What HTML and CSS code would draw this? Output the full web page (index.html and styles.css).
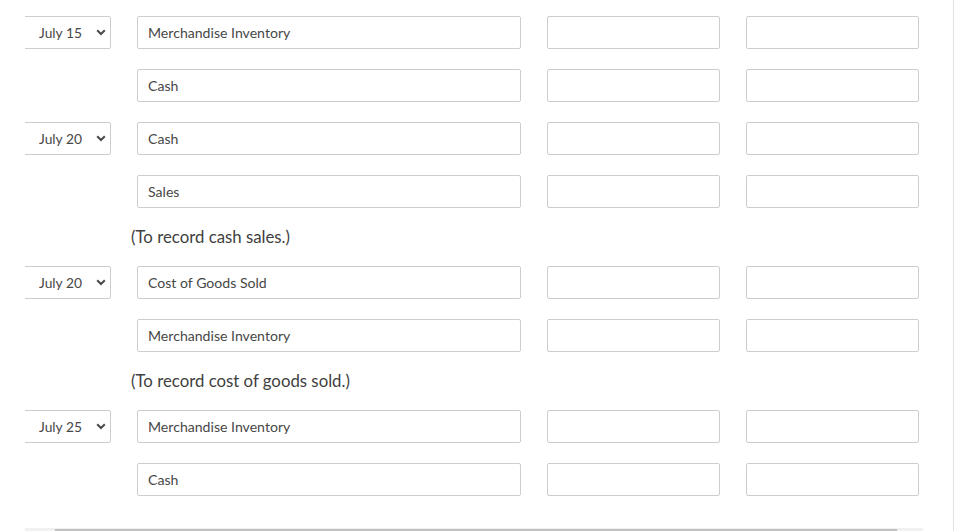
FILE: index.html
```html
<!DOCTYPE html>
<html lang="en">
<head>
    <meta charset="UTF-8">
    <meta name="viewport" content="width=device-width, initial-scale=1.0">
    <title>Journal Entries</title>
    <link rel="stylesheet" href="styles.css">
</head>
<body>
    <div class="page">
        <div class="scroll-area">
            <div class="journal">
                <div class="entry-row">
                    <div class="date-cell">
                        <select class="date-select">
                            <option>July 15</option>
                        </select>
                        <svg class="chevron" width="10" height="7" viewBox="0 0 10 7"><path d="M1.2 1.2 L5 5 L8.8 1.2" fill="none" stroke="#4a4a4a" stroke-width="2"/></svg>
                    </div>
                    <input class="account" type="text" value="Merchandise Inventory">
                    <input class="amount" type="text">
                    <input class="amount" type="text">
                </div>
                <div class="entry-row">
                    <div class="date-cell"></div>
                    <input class="account" type="text" value="Cash">
                    <input class="amount" type="text">
                    <input class="amount" type="text">
                </div>

                <div class="entry-row">
                    <div class="date-cell">
                        <select class="date-select">
                            <option>July 20</option>
                        </select>
                        <svg class="chevron" width="10" height="7" viewBox="0 0 10 7"><path d="M1.2 1.2 L5 5 L8.8 1.2" fill="none" stroke="#4a4a4a" stroke-width="2"/></svg>
                    </div>
                    <input class="account" type="text" value="Cash">
                    <input class="amount" type="text">
                    <input class="amount" type="text">
                </div>
                <div class="entry-row">
                    <div class="date-cell"></div>
                    <input class="account" type="text" value="Sales">
                    <input class="amount" type="text">
                    <input class="amount" type="text">
                </div>
                <p class="note">(To record cash sales.)</p>

                <div class="entry-row">
                    <div class="date-cell">
                        <select class="date-select">
                            <option>July 20</option>
                        </select>
                        <svg class="chevron" width="10" height="7" viewBox="0 0 10 7"><path d="M1.2 1.2 L5 5 L8.8 1.2" fill="none" stroke="#4a4a4a" stroke-width="2"/></svg>
                    </div>
                    <input class="account" type="text" value="Cost of Goods Sold">
                    <input class="amount" type="text">
                    <input class="amount" type="text">
                </div>
                <div class="entry-row">
                    <div class="date-cell"></div>
                    <input class="account" type="text" value="Merchandise Inventory">
                    <input class="amount" type="text">
                    <input class="amount" type="text">
                </div>
                <p class="note">(To record cost of goods sold.)</p>

                <div class="entry-row">
                    <div class="date-cell">
                        <select class="date-select">
                            <option>July 25</option>
                        </select>
                        <svg class="chevron" width="10" height="7" viewBox="0 0 10 7"><path d="M1.2 1.2 L5 5 L8.8 1.2" fill="none" stroke="#4a4a4a" stroke-width="2"/></svg>
                    </div>
                    <input class="account" type="text" value="Merchandise Inventory">
                    <input class="amount" type="text">
                    <input class="amount" type="text">
                </div>
                <div class="entry-row">
                    <div class="date-cell"></div>
                    <input class="account" type="text" value="Cash">
                    <input class="amount" type="text">
                    <input class="amount" type="text">
                </div>
            </div>
            <div class="scrollbar"><div class="thumb"></div></div>
        </div>
    </div>
</body>
</html>
```

FILE: styles.css
```css
html, body {
    margin: 0;
    height: 100%;
    overflow: hidden;
    background-color: #fff;
}
body {
    font-family: 'Lato', 'Open Sans', sans-serif;
    color: #474747;
}
.page {
    width: 953px;
    height: 100%;
    border-right: 1px solid #e2e2e2;
}
.scroll-area {
    margin-left: 25px;
    width: 898px;
    padding-top: 16px;
    overflow: hidden;
}
.journal {
    padding-bottom: 12px;
}
.entry-row {
    display: flex;
    gap: 26px;
    height: 33px;
    margin-bottom: 20px;
}
.date-cell {
    position: relative;
    width: 86px;
    flex-shrink: 0;
}
.date-select {
    appearance: none;
    -webkit-appearance: none;
    box-sizing: border-box;
    width: 101px;
    height: 33px;
    margin-left: -15px;
    padding: 0 0 0 28px;
    border: 1px solid #cdcdcd;
    border-radius: 2px;
    background-color: #fff;
    font-family: inherit;
    font-size: 13.8px;
    color: #474747;
}
.chevron {
    position: absolute;
    left: 71px;
    top: 13px;
}
input {
    box-sizing: border-box;
    height: 33px;
    margin: 0;
    border: 1px solid #cdcdcd;
    border-radius: 2px;
    background-color: #fff;
    font-family: inherit;
    font-size: 14.1px;
    color: #474747;
}
.account {
    width: 384px;
    padding: 0 10px;
}
.amount {
    width: 173px;
    padding: 0 8px;
}
.note {
    margin: 0 0 20px 106px;
    height: 18px;
    line-height: 18px;
    font-size: 16.8px;
    color: #3f3f3f;
}
.scrollbar {
    height: 10px;
    background-color: #f1f1f1;
    padding: 1px 0 0 30px;
}
.thumb {
    width: 842px;
    height: 8px;
    background-color: #c1c1c1;
}
```
